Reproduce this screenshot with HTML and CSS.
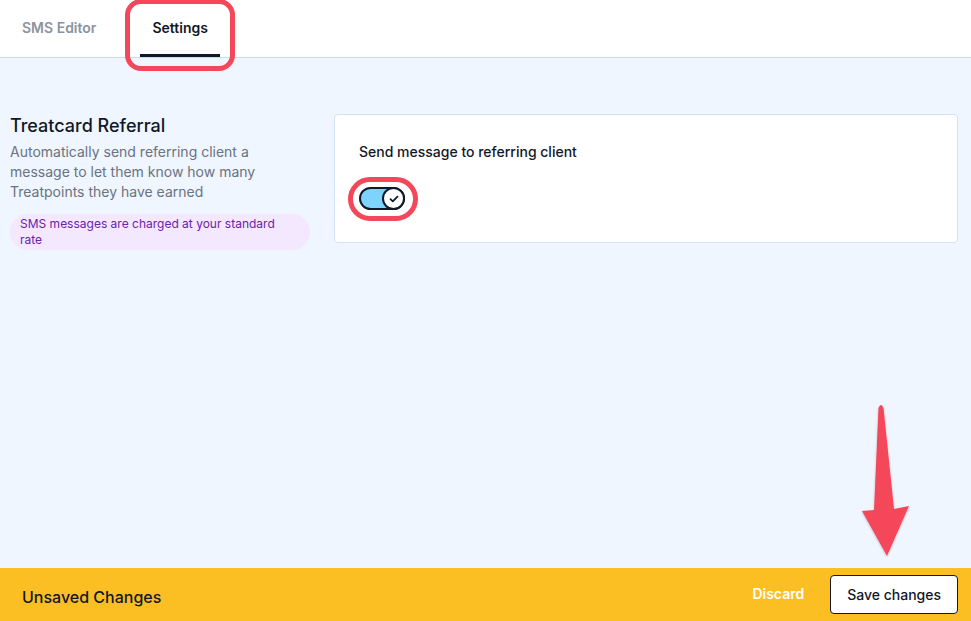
FILE: index.html
```html
<!DOCTYPE html>
<html lang="en">
  <head>
    <meta charset="UTF-8" />
    <meta name="viewport" content="width=device-width, initial-scale=1.0" />
    <title>Treatcard Referral Settings</title>
    <link rel="stylesheet" href="styles.css">
  </head>
  <body>
    <div class="page">
      <div class="tabs">
        <div class="tab">SMS Editor</div>
        <div class="tab active">Settings</div>
      </div>

      <div class="content">
        <div class="intro">
          <h2 class="title">Treatcard Referral</h2>
          <p class="desc">Automatically send referring client a message to let them know how many Treatpoints they have earned</p>
          <div class="badge">SMS messages are charged at your standard rate</div>
        </div>
        <div class="card">
          <div class="label">Send message to referring client</div>
          <div class="switch on">
            <span class="knob">
              <svg width="10" height="8" viewBox="0 0 10 8"><path d="M1.5 4.2 L3.8 6.3 L8.5 1.6" fill="none" stroke="#111827" stroke-width="1.8" stroke-linecap="round" stroke-linejoin="round"/></svg>
            </span>
          </div>
        </div>
      </div>

      <div class="savebar">
        <div class="savebar-title">Unsaved Changes</div>
        <div class="savebar-actions">
          <button class="discard">Discard</button>
          <button class="save">Save changes</button>
        </div>
      </div>
    </div>

    <!-- annotations drawn over the screenshot -->
    <div class="mark mark-tab"></div>
    <div class="mark mark-switch"></div>
    <svg class="arrow" width="971" height="621" viewBox="0 0 971 621">
      <defs>
        <filter id="sh" x="-20%" y="-20%" width="140%" height="140%">
          <feDropShadow dx="0" dy="1" stdDeviation="1.2" flood-color="#000" flood-opacity="0.25"/>
        </filter>
      </defs>
      <path d="M878.5 408 Q881 402 883.5 408 L894 509 L909 506 L887 556 L862 511 L874 510 Z" fill="#f5475a" filter="url(#sh)"/>
    </svg>
  </body>
</html>
```

FILE: styles.css
```css
* {
  margin: 0;
  padding: 0;
  box-sizing: border-box;
}

html,
body {
  height: 100%;
}
body {
  font-family: Inter, "Noto Sans", sans-serif;
  color: #111827;
  background: #eff6ff;
  position: relative;
  overflow: hidden;
}

.page {
  height: 100vh;
  display: flex;
  flex-direction: column;
}

/* tabs */
.tabs {
  height: 58px;
  background: #fff;
  border-bottom: 1px solid #c7dbf3;
  display: flex;
  gap: 32px;
  padding-left: 10px;
}
.tabs .tab {
  padding: 0 12px;
  font-size: 14px;
  font-weight: 600;
  color: #8c93a0;
  line-height: 56px;
  height: 57px;
  border-bottom: 3px solid transparent;
}
.tabs .tab.active {
  color: #111827;
  border-bottom-color: #111827;
}

/* body */
.content {
  flex: 1;
  display: flex;
  align-items: flex-start;
  gap: 24px;
  padding: 54px 13px 0 10px;
}
.intro {
  width: 300px;
  flex-shrink: 0;
}
.intro .title {
  font-size: 18px;
  font-weight: 500;
  line-height: 28px;
  color: #111827;
}
.intro .desc {
  margin-top: 2px;
  font-size: 14px;
  line-height: 20px;
  color: #6b7280;
}
.intro .badge {
  margin-top: 12px;
  background: #f3e8ff;
  color: #6b21a8;
  font-size: 12px;
  line-height: 16px;
  padding: 2px 10px;
  border-radius: 18px;
}

.card {
  flex: 1;
  margin-top: 2px;
  background: #fff;
  border: 1px solid #d3e3f6;
  border-radius: 4px;
  padding: 27px 24px 32px;
}
.card .label {
  font-size: 14px;
  font-weight: 500;
  line-height: 20px;
  color: #111827;
}
.switch {
  margin-top: 25px;
  width: 46px;
  height: 23px;
  border: 2px solid #111827;
  border-radius: 12px;
  background: #e5e7eb;
  display: flex;
  align-items: center;
  position: relative;
}
.switch.on {
  background: #7dd3fc;
  justify-content: flex-end;
}
.switch .knob {
  width: 23px;
  height: 23px;
  margin: -2px;
  border: 2px solid #111827;
  border-radius: 50%;
  background: #fff;
  display: flex;
  align-items: center;
  justify-content: center;
}

/* bottom bar */
.savebar {
  height: 53px;
  background: #fbbf24;
  display: flex;
  align-items: center;
  justify-content: space-between;
  padding: 0 13px 0 22px;
}
.savebar-title {
  font-size: 16px;
  font-weight: 500;
  color: #111827;
  margin-top: 4px;
}
.savebar-actions {
  display: flex;
  align-items: center;
  gap: 26px;
}
.savebar button {
  font-family: inherit;
  font-size: 14px;
  cursor: pointer;
  white-space: nowrap;
}
.discard {
  background: none;
  border: none;
  color: #fff;
  font-weight: 600;
  margin-top: -2px;
}
.save {
  background: #fff;
  color: #111827;
  font-weight: 500;
  border: 1px solid #111827;
  border-radius: 4px;
  height: 39px;
  padding: 0 16px;
}

/* annotation marks */
.mark {
  position: absolute;
  border: 5px solid #f5475a;
  pointer-events: none;
}
.mark-tab {
  left: 125px;
  top: -1px;
  width: 110px;
  height: 72px;
  border-radius: 16px;
}
.mark-switch {
  left: 348px;
  top: 177px;
  width: 70px;
  height: 44px;
  border-radius: 22px;
}
.arrow {
  position: absolute;
  left: 0;
  top: 0;
  pointer-events: none;
}
```
